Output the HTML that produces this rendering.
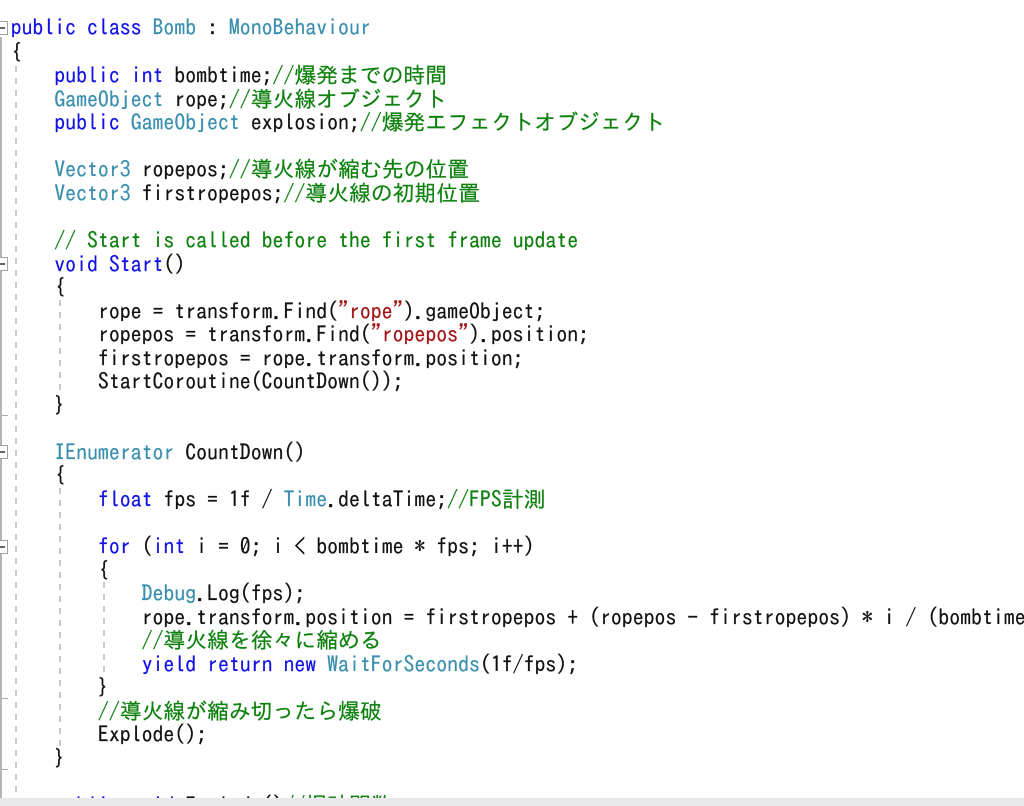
<!DOCTYPE html>
<html lang="ja">
<head>
<meta charset="utf-8">
<style>
html,body{margin:0;padding:0;background:#fff}
#p{position:relative;width:1024px;height:806px;overflow:hidden;background:#fff}
#c{position:absolute;left:0;top:0;width:1024px;height:806px;filter:blur(.35px)}
.l{position:absolute;left:10.6px;white-space:pre;height:24px;line-height:24px;font-family:"IPAGothic","Noto Sans CJK JP",monospace;font-size:21.84px;color:#111;-webkit-text-stroke:.2px currentColor}
.k{color:#1212e6}.t{color:#3a8fae}.g{color:#0d800d}.r{color:#a31515}
.b{position:absolute;left:0;width:8px;height:14px;border:1px solid #a0a0a0;border-left:0;box-sizing:border-box;background:#fff}
.b:after{content:"";position:absolute;left:0;top:5px;width:5px;height:2px;background:#666}
.d{position:absolute;width:2px;background:repeating-linear-gradient(to bottom,#c8c8c8 0,#c8c8c8 6px,transparent 6px,transparent 12px)}
.e{position:absolute;height:1px;background:#aaa;left:2px;width:6px}
</style>
</head>
<body>
<div id="p">
<div id="c">
<div style="position:absolute;left:0;top:37px;width:2px;height:761px;background:#b5b5b5"></div>
<div class="d" style="left:15px;top:66px;height:732px"></div>
<div class="d" style="left:59px;top:300px;height:92px"></div>
<div class="d" style="left:59px;top:488px;height:262px"></div>
<div class="d" style="left:103px;top:582px;height:92px"></div>
<div class="b" style="top:21px"></div>
<div class="b" style="top:257px"></div>
<div class="b" style="top:445px"></div>
<div class="b" style="top:540px"></div>
<div class="e" style="top:415px"></div>
<div class="e" style="top:698px"></div>
<div class="e" style="top:769px"></div>

<div class="l" style="top:15px"><span class="k">public class</span> <span class="t">Bomb</span> : <span class="t">MonoBehaviour</span></div>
<div class="l" style="top:40px">{</div>
<div class="l" style="top:63px">    <span class="k">public int</span> bombtime;<span class="g">//爆発までの時間</span></div>
<div class="l" style="top:87px">    <span class="t">GameObject</span> rope;<span class="g">//導火線オブジェクト</span></div>
<div class="l" style="top:110px">    <span class="k">public</span> <span class="t">GameObject</span> explosion;<span class="g">//爆発エフェクトオブジェクト</span></div>
<div class="l" style="top:157px">    <span class="t">Vector3</span> ropepos;<span class="g">//導火線が縮む先の位置</span></div>
<div class="l" style="top:181px">    <span class="t">Vector3</span> firstropepos;<span class="g">//導火線の初期位置</span></div>
<div class="l" style="top:228px">    <span class="g">// Start is called before the first frame update</span></div>
<div class="l" style="top:252px">    <span class="k">void</span> <span class="k">Start</span>()</div>
<div class="l" style="top:275px">    {</div>
<div class="l" style="top:299px">        rope = transform.Find(<span class="r">"rope"</span>).gameObject;</div>
<div class="l" style="top:322px">        ropepos = transform.Find(<span class="r">"ropepos"</span>).position;</div>
<div class="l" style="top:346px">        firstropepos = rope.transform.position;</div>
<div class="l" style="top:369px">        StartCoroutine(CountDown());</div>
<div class="l" style="top:393px">    }</div>
<div class="l" style="top:440px">    <span class="t">IEnumerator</span> CountDown()</div>
<div class="l" style="top:463px">    {</div>
<div class="l" style="top:487px">        <span class="k">float</span> fps = 1f / <span class="t">Time</span>.deltaTime;<span class="g">//FPS計測</span></div>
<div class="l" style="top:534px">        <span class="k">for</span> (<span class="k">int</span> i = 0; i &lt; bombtime * fps; i++)</div>
<div class="l" style="top:558px">        {</div>
<div class="l" style="top:581px">            <span class="t">Debug</span>.Log(fps);</div>
<div class="l" style="top:605px">            rope.transform.position = firstropepos + (ropepos - firstropepos) * i / (bombtime * fps);</div>
<div class="l" style="top:628px">            <span class="g">//導火線を徐々に縮める</span></div>
<div class="l" style="top:652px">            <span class="k">yield return new</span> <span class="t">WaitForSeconds</span>(1f/fps);</div>
<div class="l" style="top:675px">        }</div>
<div class="l" style="top:699px">        <span class="g">//導火線が縮み切ったら爆破</span></div>
<div class="l" style="top:722px">        Explode();</div>
<div class="l" style="top:746px">    }</div>
<div class="l" style="top:793px">    <span class="k">public void</span> Explode()<span class="g">//爆破関数</span></div>
</div>
<div style="position:absolute;left:0;top:798px;width:1024px;height:8px;background:#e8e8ec"></div>
</div>
</body>
</html>
